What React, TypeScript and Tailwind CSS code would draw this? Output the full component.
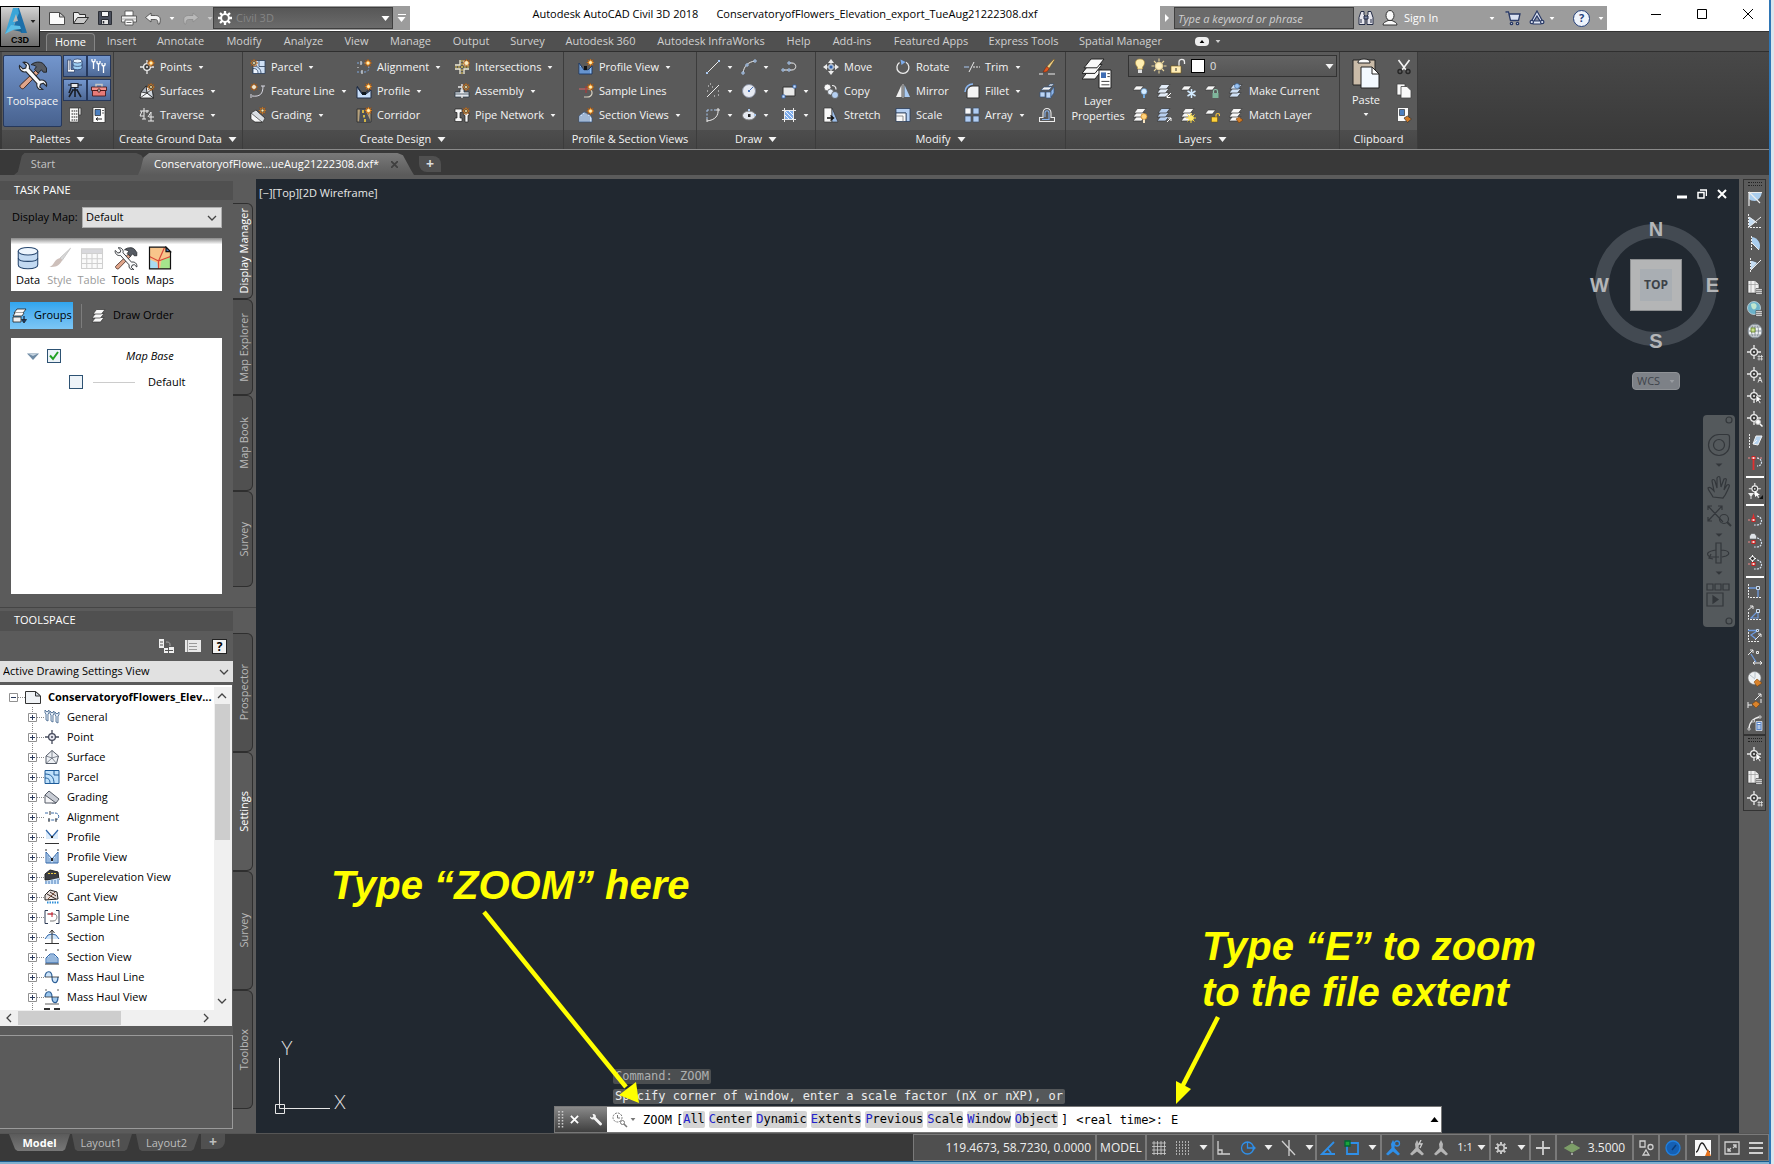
import type { ReactNode } from 'react';

const W = '#ececec';
const B = '#a9c8f0';

// small orange "new" spark used on the create icons
const Spark = ({ x = 12, y = 4 }: { x?: number; y?: number }) => (
  <g transform={`translate(${x} ${y})`}>
    <path
      d="M0-4L1-1.8 3-3 1.8-1 4 0 1.8 1 3 3 1 1.8 0 4-1 1.8-3 3-1.8 1-4 0-1.8-1-3-3-1-1.8Z"
      fill="#f59a2e"
      stroke="#8a4510"
      strokeWidth=".4"
    />
    <circle r="1.5" fill="#fff0b8" />
  </g>
);

const Sheets = ({ c = '#f8f8f8' }: { c?: string }) => (
  <g fill={c} stroke="#333" strokeWidth=".7">
    <path d="M4.5 9.5H13L9.5 14H1z" />
    <path d="M4.5 5.5H13L9.5 10H1z" />
    <path d="M5.5 1.5H14L10.5 6H2z" />
  </g>
);

const Sheet = () => <path d="M4 3h7.5l-3 4H1z" fill="#f8f8f8" stroke="#333" strokeWidth=".6" />;

const Cross = ({ c = W, f = '#3c3c3c' }: { c?: string; f?: string }) => (
  <g stroke={c} strokeWidth="1.3" fill={f}>
    <path d="M8 1v4M8 11v4M1 8h4M11 8h4" />
    <circle cx="8" cy="8" r="3.4" />
    <circle cx="8" cy="8" r="1" fill={c} stroke="none" />
  </g>
);

const RedCurve = () => (
  <g fill="none">
    <path d="M1 9h7" stroke="#f08a8a" strokeDasharray="2 1" />
    <path d="M10 5c6 1 6 9 0 9H7" stroke="#d5e2f0" strokeDasharray="2 1" strokeWidth="1.2" />
    <rect x="5" y="7.5" width="3" height="3" fill="#f7dada" stroke="#c22" />
  </g>
);

const icons: Record<string, ReactNode> = {
  newFile: (
    <g fill="#fbfbfb" stroke="#4a4a4a">
      <path d="M.5 2.5h10l5 4.5v7.5H.5z" />
      <path d="M10.5 2.5V7h5z" fill="#d0d0d0" />
    </g>
  ),
  open: (
    <g fill="#ededed" stroke="#2f2f2f">
      <path d="M.5 13.5v-11h5l1 2h6v3" />
      <path d="M.5 13.5l4-6h11L11 13.500z" fill="#c9c9c9" />
    </g>
  ),
  save: (
    <g stroke="#2c2f36">
      <path d="M1.5 1.5h13v13h-13z" fill="#4a4f5c" />
      <path d="M4.5 1.5h7v5h-7z" fill="#f6f6f6" />
      <path d="M4.5 9.5h7v5h-7z" fill="#e6e6e6" />
      <path d="M6.5 11v2.5" strokeWidth="1.5" />
    </g>
  ),
  print: (
    <g stroke="#4a4a4a" strokeWidth=".8">
      <path d="M4 1h8v5H4z" fill="#fff" />
      <path d="M.5 6h15v6H.5z" fill="#f0f0f0" />
      <path d="M.5 9h15" stroke="#999" />
      <path d="M4 10h8v5H4z" fill="#fff" />
      <path d="M5.5 12.5h5" />
    </g>
  ),
  undo: <path d="M6 3L.5 7.5 6 12V9.5h4.5c1.5 0 2.5 1 2.5 4.5h1.5c2-6 0-8.5-4-8.5H6z" fill="#f5f5f5" stroke="#444" strokeWidth=".8" />,
  redo: <path d="M10 3l5.500 4.500L10 12V9.500H5.500C4 9.500 3 10.500 3 14H1.500c-2-6 0-8.500 4-8.500H10z" fill="#b9b9b9" stroke="#8b8b8b" strokeWidth=".8" />,
  gear: (
    <g stroke="currentColor" fill="none">
      <circle cx="8" cy="8" r="4.4" strokeWidth="2.2" />
      <path d="M8 0v3.5M8 12.5V16M0 8h3.5M12.5 8H16M2.3 2.3l2.4 2.4M11.3 11.3l2.4 2.4M2.3 13.7l2.4-2.4M11.3 4.7l2.4-2.4" strokeWidth="2.6" />
    </g>
  ),
  binoculars: (
    <g fill="#e6e6ee" stroke="#222b45">
      <path d="M3 1.5h3v3l1 2v8H1v-7zM10 1.5h3l2 6v7H9v-8l1-2z" />
      <path d="M6 6h4v3H6z" fill="#7c87a5" />
      <path d="M3 9v4M13 9v4" />
    </g>
  ),
  user: (
    <g fill="#fafafa" stroke="#333">
      <path d="M1 15c0-3 3-3 5-4.5h4c2 1.5 5 1.5 5 4.5z" />
      <ellipse cx="8" cy="5.5" rx="4" ry="5" />
    </g>
  ),
  cart: (
    <g stroke="#2a3a66" strokeWidth="1.3" fill="#d9e1f2">
      <path d="M.5 2h3l2 8.5h8L15 4H4" />
      <circle cx="6.5" cy="13.5" r="1.2" />
      <circle cx="12.5" cy="13.5" r="1.2" />
    </g>
  ),
  share: (
    <g stroke="#2a3a66" strokeWidth="1.2" fill="#dfe6f5">
      <path d="M8 1l6 11-2 2H4l-2-2z" />
      <path d="M8 6l3 5H5z" fill="#8c93a5" />
      <circle cx="2.8" cy="12" r="1.7" />
      <circle cx="13.2" cy="12" r="1.7" />
    </g>
  ),
  tools: (
    <g>
      <path d="M9.5 5.500l1.500 1.500-8 8.200c-.8.7-2.6-1-1.8-1.800z" fill="#e0a58a" stroke="#3d231a" strokeWidth=".5" />
      <path
        d="M7 2.500C9 .8 12 .7 13.500 2l1.700 2.300v2.200h-1.700l-1-1.300-1.700 1.800-2-2 1-1.400C9 2.800 8 2.600 7 2.500z"
        fill="#565b63"
        stroke="#1f2226"
        strokeWidth=".5"
      />
      <path
        d="M.8 3l1.800 1.700 1.500-.4.4-1.500L2.800 1.200C4.800.8 6.600 2.500 6 4.500l5.700 6.300c2-.6 4 1 3.500 3.200l-1.700-1.600-1.500.5-.4 1.500 1.700 1.400c-2 .5-3.700-1.100-3.200-3.200L4.300 6.300C2.300 6.800.4 5 .8 3z"
        fill="#fafbfc"
        stroke="#25282d"
        strokeWidth=".6"
      />
    </g>
  ),
  prospector: (
    <g stroke="#22365e" strokeWidth=".7">
      <path d="M.5 2v12h7v-2.5H4V2z" fill="#fff" />
      <path d="M2.2 2v10" />
      <path d="M6 3v6.5c0 3 9 3 9 0V3z" fill="#9fd0f5" />
      <path d="M6 6.500c0 2.500 9 2.500 9 0" fill="none" />
      <ellipse cx="10.5" cy="3" rx="4.5" ry="2" fill="#e7f4ff" />
    </g>
  ),
  wrenches: (
    <g stroke="#fff" strokeWidth="1.3" fill="none">
      <path d="M1 1v2l1.5 1.5L4 3V1M2.5 4.5V11M6 3v2l1.500 1.500L9 5V3M7.500 6.500V13M11 5v2l1.500 1.500L14 7V5M12.500 8.500V15" />
    </g>
  ),
  survey: (
    <g stroke="#1d2433" fill="#e8e8e8">
      <path d="M4 1.5h7v4H4zM1 3h3M11 3h4" strokeWidth="1.2" />
      <path d="M8 5v3M5 8h6M6 8L2 15M8 8v7M10 8l4 7M4 6l-2 5" fill="none" stroke="#1a1e26" strokeWidth="1.6" />
    </g>
  ),
  toolbox: (
    <g stroke="#3a0e0e" strokeWidth=".8">
      <path d="M5 5V2.5h6V5" fill="none" stroke="#c6c6c6" strokeWidth="1.6" />
      <path d="M.5 5h15v3.5H.5z" fill="#f2918c" />
      <path d="M1.5 8.5h13V14h-13z" fill="#e77b78" />
      <path d="M7 7h2v3H7z" fill="#fff" />
    </g>
  ),
  palA: (
    <g stroke="#333" strokeWidth=".7">
      <path d="M2.5 1h9v14h-9z" fill="#f8f8f8" />
      <path d="M4.5 4h6M4.5 7h6M4.5 10h6M4.5 13h6" stroke="#666" strokeDasharray="1.5 .7" strokeWidth="1.5" />
      <path d="M11.5 1H14v7h-2.5z" fill="#ccc" />
    </g>
  ),
  palB: (
    <g stroke="#222" strokeWidth=".7">
      <path d="M2 .5h12v15H2z" fill="#fdfdfd" />
      <path d="M4 2.5h5.5v6H4z" fill="#4b7fc0" />
      <path d="M11 3.5h2M11 6h2" />
      <path d="M5 12h6M7 10.5L5 12l2 1.5" fill="none" strokeWidth="1" />
    </g>
  ),
  points: (
    <g>
      <Cross />
      <Spark />
    </g>
  ),
  surfaces: (
    <g stroke="#222" strokeWidth=".8">
      <path d="M2 9l5-6 6 3 1.5 9H1z" fill="#f2f4f6" />
      <path d="M7 3l1 7 6.5 5M8 10L1 15" fill="none" />
      <path d="M2 9l5-6 1 7z" fill="#aab1ba" />
      <path d="M8 10l5-4 1.5 9z" fill="#cfd6de" />
      <Spark />
    </g>
  ),
  traverse: (
    <g stroke={W} fill="none">
      <path d="M5 1v11M1 4h9M8 3v3M12 5v9M10 10h5M3 4l-2 5M12 5l-3 5M3 12h4M9 14h6M1 9h4" />
    </g>
  ),
  parcel: (
    <g stroke="#2a3c58" strokeWidth=".8">
      <path d="M3 1.5h12v13H3z" fill="#cfe0f5" />
      <path d="M3 7c5 0 8 3 8 7.5M9 1.5v6M15 7.5H9" fill="none" />
      <path d="M3 9.5c4 0 5 2 5 5H3z" fill="#eef5ff" />
      <Spark x={4} />
    </g>
  ),
  featureLine: (
    <g stroke="#d8d8e2" fill="none">
      <path d="M2 13c8 1 11-2 11-10M11 3h4M1 11v4" />
      <Spark x={4} />
    </g>
  ),
  grading: (
    <g stroke="#333" strokeWidth=".7">
      <path d="M1 6l5-3 9 8-2 4H5l-4-3z" fill="#d9dde2" />
      <path d="M1 6v6l4 3h7z" fill="#f8f8f8" />
      <path d="M6 3l9 8" fill="none" />
      <Spark x={12.5} y={3.5} />
    </g>
  ),
  alignment: (
    <g fill="none">
      <path d="M1 4h9M1 13h8c5 0 5-7 1-9" stroke="#7fa8de" strokeDasharray="2 1.5" />
      <path d="M5 2v4M6 11v4M2 8v1" stroke={W} />
      <Spark />
    </g>
  ),
  profile: (
    <g>
      <path d="M1 4v11h14V7l-5 4H6z" fill="#c7defa" stroke="#1e2c46" />
      <path d="M1 3l5 7h3l5-4" fill="none" stroke="#1e2c46" />
      <path d="M6 9h4v3H6z" fill="#101820" />
      <Spark x={12.5} y={3.5} />
    </g>
  ),
  corridor: (
    <g>
      <path d="M1 2h14v13H1z" fill="#b7a27c" stroke="#333" />
      <path d="M4 2h5l6 13H3z" fill="#4b5058" />
      <path d="M7 3v3M8 8v2.5M9 12v3" stroke="#ffd640" strokeWidth="1.5" />
      <Spark x={12.5} y={3.5} />
    </g>
  ),
  intersections: (
    <g stroke="#f0ecd8">
      <path d="M6 1v5H1M10 1v5h5M6 15v-5H1M10 15v-5h5" fill="none" strokeWidth="1.3" />
      <path d="M8 1v14M1 8h14" stroke="#e2c24a" strokeDasharray="2 1" />
      <Spark x={12.5} />
    </g>
  ),
  assembly: (
    <g stroke="#24303f" strokeWidth=".7">
      <path d="M1 9h5V6h4v3h5v5H1z" fill="#dfe5ec" />
      <path d="M8 1v14M4 4h4" stroke="#e9e9e9" strokeWidth="1.4" />
      <path d="M1 11h14" />
      <Spark x={12} />
    </g>
  ),
  pipe: (
    <g fill="#f8f8f8" stroke="#222" strokeWidth=".7">
      <path d="M1 2h7v3.5H6V11h2v3.5H1V11h2V5.5H1z" />
      <path d="M10 6h5v2.5h-1V15h-3V8.5h-1z" />
      <Spark />
    </g>
  ),
  profileView: (
    <g>
      <path d="M1 4v11h13V7l-4 4H6z" fill="#8fbcf2" stroke="#1e3a66" />
      <path d="M3 8v7M5 10v5M7 12v3M9 12v3M11 10v5" stroke="#1c4b91" strokeWidth=".7" />
      <path d="M6 7h3v4H6z" fill="#111" />
      <Spark x={12.5} y={3.5} />
    </g>
  ),
  sampleLines: (
    <g fill="none">
      <path d="M1 6h9" stroke="#d66" />
      <path d="M10 6c6 1 5 8-1 8H6" stroke="#d8d2c2" strokeWidth="1.2" />
      <path d="M8 3v7" stroke="#b33" />
      <Spark x={12.5} />
    </g>
  ),
  sectionViews: (
    <g>
      <path d="M1 15V9l5-4 6 3 2 3v4z" fill="#cfe1f7" stroke="#35557f" strokeWidth=".7" />
      <path d="M3 9v6M5 7v8M7 6v9M9 7v8M11 9v6" stroke="#35557f" strokeWidth=".6" />
      <Spark x={12.5} />
    </g>
  ),
  line: (
    <g>
      <path d="M2 14L14 2" stroke={W} />
      <path d="M1 13h2v2H1zM13 1h2v2h-2z" fill={B} />
    </g>
  ),
  arc: (
    <g fill="none">
      <path d="M2 14C3 7 7 3 14 2" stroke={W} />
      <path d="M1 13h2v2H1zM5 5h2v2H5zM13 1h2v2h-2z" fill="#5a5a5a" stroke={B} />
    </g>
  ),
  pline: (
    <g fill="none">
      <path d="M8 4h3c5 0 5 7 0 7H2" stroke={W} />
      <path d="M7 3h2v2H7zM1 10h2v2H1zM7 10h2v2H7z" fill="#5a5a5a" stroke={B} />
    </g>
  ),
  construct: (
    <g>
      <path d="M2 14L14 2" stroke={W} />
      <path d="M3 3h1M7 4h1M2 8h1M13 8h1M9 13h1M13 12h1M5 1h1" stroke={W} />
    </g>
  ),
  circle: (
    <g>
      <circle cx="8" cy="8" r="6.5" fill="#e6eaf2" stroke="#888fa0" />
      <path d="M8 8l4-4" stroke="#4a74b8" />
      <path d="M7 7h2v2H7z" fill="#4a74b8" />
    </g>
  ),
  rect: (
    <g>
      <path d="M2 4h12v9H2z" fill="#e9e9e9" stroke="#333" />
      <path d="M1 12h3v3H1zM12 2h3v3h-3z" fill="#cfe0f8" stroke="#3465ad" strokeWidth=".8" />
    </g>
  ),
  arc3: (
    <g fill="none">
      <path d="M2 3v9M2 3h9" stroke={B} strokeDasharray="2 1.5" />
      <path d="M13 1c1 8-3 12-11 13M11 3h4M2 12v3" stroke={W} />
    </g>
  ),
  ellipse: (
    <g>
      <ellipse cx="8" cy="8.5" rx="6.5" ry="4.5" fill="#e4e8f0" stroke="#777" />
      <path d="M7 7h2.5v3H7z" fill="#222" />
      <path d="M7 2h2v2H7zM13 7h2v2h-2z" fill={B} />
    </g>
  ),
  hatch: (
    <g>
      <path d="M4 4h8v8H4z" fill="#7fadea" />
      <path d="M4 8l4 4M4 4l8 8M8 4l4 4" stroke="#eef4ff" />
      <path d="M3.5 1v14M12.5 1v14M1 3.5h14M1 12.5h14" stroke={W} />
    </g>
  ),
  move: (
    <g fill={W}>
      <path d="M8 0l3 4H5zM8 16l3-4H5zM0 8l4-3v6zM16 8l-4-3v6z" />
      <path d="M7.5 4h1v8h-1zM4 7.5h8v1H4z" />
      <path d="M6 6h4v4H6z" fill="#2f5fa8" stroke="#c9d9ef" />
    </g>
  ),
  copy: (
    <g stroke="#555" strokeWidth=".8">
      <circle cx="4.5" cy="4.5" r="3.5" fill="#f8f8f8" />
      <circle cx="7.5" cy="9" r="3" fill="#e4ecf7" />
      <circle cx="12" cy="12" r="3.5" fill="#b5d0f2" />
      <path d="M9 2.5c3 0 4 1 4 4" fill="none" stroke={W} strokeWidth="1.2" />
    </g>
  ),
  stretch: (
    <g stroke="#333" strokeWidth=".7">
      <path d="M1 1h8v14H1z" fill="#f8f8f8" />
      <path d="M9 1l6 14H9z" fill="#9ec0ec" />
      <path d="M4 11h6M7.5 8.5l3 2.5-3 2.5" fill="none" stroke="#111" strokeWidth="1.4" />
    </g>
  ),
  rotate: (
    <g fill="none" stroke={W} strokeWidth="1.3">
      <path d="M4.5 3.5A6 6 0 1 0 11 3.3" />
      <path d="M5.5.5l5 2.5-4 3z" fill="#7eaceb" stroke="none" />
    </g>
  ),
  mirror: (
    <g>
      <path d="M6.5 2v12H1z" fill="#f0f0f0" />
      <path d="M9.5 2v12H15z" fill="#aacbf2" />
      <path d="M8 1v14" stroke="#ddd" strokeWidth=".8" />
    </g>
  ),
  scale: (
    <g stroke="#2b3c58" strokeWidth=".8">
      <path d="M1 1.5h14v13h-4V6H1z" fill="#b4cff2" />
      <path d="M1 6h10v8.5H1z" fill="#f8f8f8" />
      <path d="M1 9h7v5.5" fill="none" stroke="#777" />
    </g>
  ),
  trim: (
    <g fill="none">
      <path d="M0 8h5" stroke={B} />
      <path d="M9 8h7" stroke={W} strokeDasharray="2 1" />
      <path d="M5 13L10 3" stroke={W} />
    </g>
  ),
  fillet: (
    <g>
      <path d="M3 15V9c0-4 3-6 6-6h6v12z" fill="#f4f4f4" stroke="#333" />
      <path d="M1 9c0-5 4-8 8-8" stroke="#8ab6f0" strokeWidth="1.5" fill="none" />
    </g>
  ),
  array: (
    <g fill="#b0cdf3" stroke="#3d4d66" strokeWidth=".7">
      <path d="M1 1h6v6H1z" fill="#f8f8f8" />
      <path d="M9 1h6v6H9zM1 9h6v6H1zM9 9h6v6H9z" />
    </g>
  ),
  erase: (
    <g>
      <path d="M15 0L8 7.5l2 2L15.5 1z" fill="#f3d58a" stroke="#6c4a10" strokeWidth=".5" />
      <path d="M8 7.5l2 2c-1 3-3 4-6 3.5 1-1 2-4 4-5.5z" fill="#e0551e" stroke="#6b2208" strokeWidth=".5" />
      <path d="M0 15h4M9 15h7" stroke={W} />
    </g>
  ),
  explode: (
    <g stroke="#35557f" strokeWidth=".7">
      <path d="M1 9h5v5H1zM7 9h5v6H7z" fill="#bcd5f4" />
      <path d="M2 7l3-3h8l-3 3z" fill="#f5f5f5" />
      <path d="M12 8l3-4v6l-3 4z" fill="#8fb6e8" />
      <path d="M9 3l2-2h4l-2 2z" fill="#f5f5f5" />
    </g>
  ),
  offset: (
    <g fill="none" strokeWidth="1.1">
      <path d="M.5 14.5h15v-4H12V6c0-6-8-6-8 0v4.5H.5z" stroke={W} />
      <path d="M3 12.5h7V6c0-3-4-3-4 0v4" stroke="#86b0ea" />
    </g>
  ),
  layerProps: (
    <g>
      <g fill="#f8f8f8" stroke="#222" strokeWidth=".5">
        <path d="M3.5 6.5H10L6.5 11H0z" />
        <path d="M3.5 3.7H10L6.5 8.2H0z" />
        <path d="M4.5 1H11L7.5 5.4H1z" />
      </g>
      <path d="M8.5 6.5h6v9h-6z" fill="#fff" stroke="#222" strokeWidth=".5" />
      <path d="M9.5 7.7H12v2.8H9.5z" fill="#3f6db3" />
      <path d="M12.7 8.3h1.2M12.7 9.8h1.2M9.7 12.2h4M9.7 13.9h4" stroke="#444" strokeWidth=".5" />
    </g>
  ),
  bulb: (
    <g>
      <path d="M8 1c6 0 5 6 2.5 8v2h-5V9C3 7 2 1 8 1z" fill="#ffeeb0" stroke="#b8933a" strokeWidth=".6" />
      <path d="M6 11.5h4V15H6z" fill="#e0e0e0" />
    </g>
  ),
  sun: (
    <g stroke="#e8d49a" strokeWidth="1.1">
      <path d="M8 .5v3M8 12.5v3M.5 8h3M12.5 8h3M3 3l2 2M11 11l2 2M3 13l2-2M11 5l2-2" />
      <circle cx="8" cy="8" r="3.5" fill="#fff2c4" />
    </g>
  ),
  unlock: (
    <g>
      <path d="M9 8V4c0-3.5 5.500-3.500 5.500 0v2" fill="none" stroke="#eee" strokeWidth="1.3" />
      <path d="M1 8h10v7H1z" fill="#ffedb5" stroke="#7a5b12" strokeWidth=".6" />
      <path d="M6 10v3" stroke="#333" />
    </g>
  ),
  ly1: (
    <g>
      <Sheet />
      <circle cx="12" cy="8.5" r="3" fill="#d6ecff" stroke="#4d8ac4" strokeWidth=".6" />
      <path d="M11 11.5h2V15h-2z" fill="#6fa8dd" />
    </g>
  ),
  ly2: (
    <g>
      <Sheets c="#e3edf9" />
      <path d="M15 10l-4 4M11 11v3.5h3.5" stroke="#fff" fill="none" />
    </g>
  ),
  ly3: (
    <g>
      <Sheet />
      <path d="M11.5 6v9M7.5 8l8 5M7.5 13l8-5" stroke="#d3ebff" strokeWidth="1.5" />
    </g>
  ),
  ly4: (
    <g>
      <Sheet />
      <path d="M9.5 10V8c0-2 4-2 4 0v2" fill="none" stroke="#8fc7ad" strokeWidth="1.2" />
      <path d="M8.5 10h6v5h-6z" fill="#7fb59b" />
    </g>
  ),
  ly5: (
    <g>
      <Sheets />
      <circle cx="12" cy="9.5" r="3" fill="#ffd27a" stroke="#c77a14" strokeWidth=".7" />
      <path d="M11 12.5h2V16h-2z" fill="#f7e4c0" />
    </g>
  ),
  ly6: (
    <g>
      <Sheets c="#b8d0f0" />
      <path d="M11 15l4-4M12 11h3v3" stroke="#fff" fill="none" />
    </g>
  ),
  ly7: (
    <g>
      <Sheets />
      <path d="M11 6v10M6 11h10M7.5 7.5l7 7M7.5 14.5l7-7" stroke="#ffd83a" />
      <circle cx="11" cy="11" r="2.8" fill="#ffe96b" />
    </g>
  ),
  ly8: (
    <g>
      <Sheet />
      <path d="M12 10V8c0-2 3.5-2 3.5 0v1" fill="none" stroke="#f2c03a" strokeWidth="1.2" />
      <path d="M7.5 10h6v5h-6z" fill="#ffd23d" stroke="#6b4d00" strokeWidth=".5" />
    </g>
  ),
  makeCurrent: (
    <g>
      <Sheets c="#cfe0f5" />
      <circle cx="9" cy="3" r="2.5" fill="#9cc4f2" stroke="#345f96" strokeWidth=".6" />
    </g>
  ),
  matchLayer: (
    <g>
      <Sheets />
      <path d="M8 12l3-2 4 3-4 3z" fill="#d07a25" stroke="#5c3108" strokeWidth=".5" />
    </g>
  ),
  paste: (
    <g stroke="#222" strokeWidth=".5">
      <path d="M1.5 1.5h11V14h-11z" fill="#cabba8" />
      <path d="M4 2.5c0-2 6-2 6 0V3H4z" fill="#fafafa" />
      <path d="M5.5 5H11l3.5 3.5v7h-9z" fill="#f3f9ff" />
      <path d="M11 5v3.5h3.5z" fill="#fff" />
    </g>
  ),
  cut: (
    <g fill="none">
      <path d="M2.5 1L10 11M13.5 1L6 11" stroke="#f4f4f4" strokeWidth="1.6" />
      <circle cx="4" cy="12.5" r="2" stroke="#262626" strokeWidth="1.4" />
      <circle cx="12" cy="12.5" r="2" stroke="#262626" strokeWidth="1.4" />
    </g>
  ),
  copyClip: (
    <g fill="#fafafa" stroke="#444" strokeWidth=".8">
      <path d="M1 1h8v11H1z" />
      <path d="M5 3.5h6l4 4V15H5z" />
    </g>
  ),
  pasteSpec: (
    <g stroke="#333" strokeWidth=".7">
      <path d="M1.5.5h11v14h-11z" fill="#fafafa" />
      <path d="M3.5 2.5h5v6h-5z" fill="#4b7fc0" />
      <path d="M8 11l3.5-2 4 3-4 3.5z" fill="#d07a25" />
    </g>
  ),
  db: (
    <g stroke="#27476f" strokeWidth=".7">
      <path d="M1.5 3.5v9c0 3.5 13 3.5 13 0v-9z" fill="#c3daf2" />
      <path d="M1.5 8c0 3 13 3 13 0" fill="none" />
      <ellipse cx="8" cy="3.5" rx="6.5" ry="2.5" fill="#edf5fd" />
    </g>
  ),
  brush: (
    <g>
      <path d="M15 1.5L8 8l1.5 1.5z" fill="#d8d8d8" stroke="#c4c4c4" strokeWidth=".6" />
      <path d="M8 8l1.5 1.5C7.5 13.5 5 14 1 14c3-1 3-5 7-6z" fill="#cdbfba" />
    </g>
  ),
  table: (
    <g stroke="#d0d0d0" fill="#fafafa" strokeWidth=".7">
      <path d="M1 2h14v13H1z" />
      <path d="M1 2h14v3H1z" fill="#d8d8dc" />
      <path d="M1 8.5h14M1 11.7h14M4.5 5v10M8 5v10M11.5 5v10" />
    </g>
  ),
  map: (
    <g strokeWidth=".8">
      <path d="M1 .8h11l3 3v11.400H1z" fill="#f8c58b" />
      <path d="M1 9l5 2 1 4.200H1z" fill="#a9dcf2" />
      <path d="M9 9.5l6-2v7.7H8z" fill="#a5e58c" />
      <path d="M1 7l6 3 4-9M7 10l8-3M7 10v5" stroke="#d9483a" fill="none" />
      <path d="M1 .8h11l3 3v11.400H1z" fill="none" stroke="#111" />
      <path d="M12 .8v3h3z" fill="#4a7bc0" stroke="#111" />
    </g>
  ),
  groups: (
    <g stroke="#222" strokeWidth=".8">
      <path d="M5 1h9l-3 4H2z" fill="#fafafa" />
      <path d="M3 5L1 8h9l2-3" fill="#fafafa" />
      <path d="M1 9h8v5H1z" fill="#f0f0f0" />
      <path d="M12 8v6" strokeWidth="1.5" stroke="#1b3c66" />
      <path d="M9.5 11.5L12 15l2.5-3.5z" fill="#1b3c66" />
    </g>
  ),
  sheets: <Sheets />,
  treeGeneral: (
    <g stroke="#4f6f94" fill="#e4edf7" strokeWidth=".9">
      <path d="M1 1v3l1 1v6l2 1V5l1-1V1L3 3zM6 2v3l1 1v6l2 1V6l1-1V2L8 4zM11 3v3l1 1v6l2 1V7l1-1V3l-2 2z" />
    </g>
  ),
  treePoint: <Cross c="#44495a" f="#e6e6ee" />,
  treeSurface: (
    <g stroke="#555c68" fill="#edf0f4">
      <path d="M8 1.5L14.5 7l-2 7.5H2V7z" />
      <path d="M8 1.5V9M2 7l6 2 6.5-2M8 9l-6 5.5M8 9l4.5 5.5" fill="none" strokeWidth=".7" />
    </g>
  ),
  treeParcel: (
    <g stroke="#1e5c9a">
      <path d="M1 1.5h14v13H1z" fill="#bfe1fb" />
      <path d="M1 5c6 0 9 3 9 9.5M1 9c4 0 5 2 5 5.5M10 1.5V6h5" fill="none" />
    </g>
  ),
  treeGrading: (
    <g stroke="#555b66">
      <path d="M1 6l4-4 10 8-3 4H8z" fill="#c8ccd4" />
      <path d="M1 6v8h11z" fill="#f4f4f6" />
    </g>
  ),
  treeAlign: (
    <g fill="none" stroke="#3a6aa5">
      <path d="M1 4h4M7 4h4c5 0 5 7 0 7H4" strokeDasharray="3 1" />
      <path d="M6 2v4M5 9v4M12 9v4" stroke="#333" />
    </g>
  ),
  treeProfile: (
    <g fill="none">
      <path d="M2 2v8h12V2L8 8z" fill="#dcecfb" />
      <path d="M2 1l6 7 6-7" stroke="#2f65a8" strokeWidth="1.2" />
      <path d="M1 14.5h14" stroke="#333" />
      <path d="M7 7h2v2H7z" fill="#222" />
    </g>
  ),
  treePV: (
    <g fill="none">
      <path d="M2 3l6 7 6-7v11H2z" fill="#cfe5fa" stroke="#2f65a8" />
      <path d="M4 6v8M6 9v5M10 9v5M12 6v8" stroke="#2f65a8" strokeWidth=".7" />
      <path d="M1 1h2M13 1h2" stroke="#333" />
      <path d="M7 9h2v3H7z" fill="#222" />
    </g>
  ),
  treeSuper: (
    <g>
      <path d="M1 5l5-4 8 2 1 8H1z" fill="#3b3d42" stroke="#222" />
      <path d="M4 4.5h8" stroke="#f1cf45" strokeDasharray="2 1" strokeWidth="1.2" />
      <path d="M1 12l14-3v6H1z" fill="#cfe5fa" />
      <path d="M2 12v3M5 12v3M8 11v4M11 11v4M14 10v5" stroke="#2f65a8" strokeWidth=".8" />
    </g>
  ),
  treeCant: (
    <g>
      <path d="M1 6l5-5 7 2 1 7-13 1z" fill="#e8e0dc" stroke="#222" />
      <path d="M3 5l9 5M6 3l6 4" stroke="#3b2b28" />
      <path d="M4 10l7-7" stroke="#8a5a40" />
      <path d="M3 13.5h12" stroke="#2f8fd8" strokeWidth="2" strokeDasharray="1.5 1" />
    </g>
  ),
  treeSample: (
    <g fill="none" stroke="#2d3b55">
      <path d="M4 1.5H1v13h3M12 1.5h3v13h-3" />
      <path d="M3 5h7c4 0 4 7-1 7H6" stroke="#777" />
      <path d="M8 3v5M4 5h5" stroke="#c23" />
    </g>
  ),
  treeSection: (
    <g fill="none">
      <path d="M1 10l3-4 4-1 4 1 3 4z" fill="#cfe5fa" />
      <path d="M1 10l3-4 4-1 4 1 3 4" stroke="#2f65a8" />
      <path d="M8 1v13M5.5 4L8 1l2.5 3M1 14.5h14" stroke="#333" />
    </g>
  ),
  treeSV: (
    <g>
      <path d="M2 14V9l4-4h4l4 4v5z" fill="#cfe5fa" stroke="#2f65a8" />
      <path d="M4 8v6M6 6v8M8 6v8M10 6v8M12 8v6" stroke="#2f65a8" strokeWidth=".7" />
      <path d="M1 1h2M13 1h2M1 15h14" stroke="#333" />
    </g>
  ),
  treeMass: (
    <g fill="none" stroke="#2d5f96" strokeWidth="1.2">
      <path d="M1 8c0-7 7-7 7 0s6 8 6 0" fill="#cfe5fa" />
      <path d="M1 8h14" stroke="#333" strokeWidth=".8" />
    </g>
  ),
  treeMassView: (
    <g fill="none" stroke="#2d5f96" strokeWidth="1.2">
      <path d="M1 8c0-7 7-7 7 0s6 8 6 0" fill="#9cc7ee" />
      <path d="M1 8h14M1 1h2M13 1h2M1 15h14" stroke="#333" strokeWidth=".8" />
    </g>
  ),
  drawing: (
    <g fill="#f0f3f6" stroke="#333">
      <path d="M.5 2.5h10l5 4.5v7.5H.5z" />
      <path d="M10.5 2.5V7h5z" fill="#cfd8e2" />
    </g>
  ),
  panorama: (
    <g fill="#f0f0f0">
      <path d="M1 1h5v9H1zM6 10h4v5H6zM11 9h5v6h-5z" />
      <path d="M2 4h3M2 7h3M7 12.5h8" stroke="#555" />
      <path d="M8 4c4 0 4 1 4 4" fill="none" stroke="#aaa" />
    </g>
  ),
  listPanel: (
    <g fill="#e8e8e8">
      <path d="M0 2h16v12H0z" />
      <path d="M4 5.5h8M4 8.5h8M4 11.5h8M2.5 2v12" stroke="#9a9a9a" />
    </g>
  ),
  t1: (
    <g>
      <path d="M2 1h13c-1 5-3 8-7 9-3 0-5-1-6-2z" fill="#a9cdee" />
      <path d="M1 1.5h14M2 1v14M2 1l11 11" stroke={W} strokeWidth="1.2" />
    </g>
  ),
  t2: (
    <g>
      <path d="M2 4c5 2 7 5 7 5l-7 5z" fill="#c5ddf3" />
      <path d="M1.5 1v13.5H15" stroke={W} fill="none" strokeDasharray="2 1" />
      <path d="M2 14L14 4M2 4l8 6" stroke={W} />
    </g>
  ),
  t3: (
    <g>
      <path d="M5 2c6 1 10 7 7 13L5 8z" fill="#a9cdee" />
      <path d="M4.5 1v14" stroke={W} strokeDasharray="2 1" />
      <path d="M5 8l7 7" stroke={W} />
    </g>
  ),
  t4: (
    <g>
      <path d="M4 4c3 0 6 2 6 2l-6 7z" fill="#c5ddf3" />
      <path d="M3.5 1v14" stroke={W} strokeDasharray="2 1" />
      <path d="M4 13L14 3" stroke={W} />
    </g>
  ),
  t5: (
    <g>
      <path d="M1 1.5h7L12 5v9H1z" fill="#f0f0f0" stroke="#333" strokeWidth=".6" />
      <path d="M4 2v12M8 2v12M1 5.5h11" stroke="#999" strokeWidth=".7" />
      <path d="M9 9.5h6v6H9z" fill="#fff" stroke="#333" strokeWidth=".6" />
      <path d="M11 9.5v6M13 9.5v6M9 11.5h6M9 13.5h6" stroke="#555" strokeWidth=".6" />
    </g>
  ),
  t6: (
    <g>
      <circle cx="7" cy="7" r="6.5" fill="#6cb2c9" stroke="#d5e4ea" strokeWidth=".7" />
      <path d="M4 3c4-2 7 1 5 4s-5 1-5-4z" fill="#c0e6d0" />
      <path d="M9 9.5h6v6H9z" fill="#fff" stroke="#333" strokeWidth=".6" />
      <path d="M11 9.5v6M13 9.5v6M9 11.5h6M9 13.5h6" stroke="#555" strokeWidth=".6" />
    </g>
  ),
  t7: (
    <g fill="none" stroke="#7a848e" strokeWidth=".8">
      <circle cx="8" cy="8" r="7" fill="#eef2f4" />
      <path d="M1 8h14M8 1v14M3 4h10M3 12h10" />
      <ellipse cx="8" cy="8" rx="3.5" ry="7" />
      <path d="M4 5h4v4H4z" fill="#c8e08a" stroke="#5f7d22" />
    </g>
  ),
  t8: (
    <g>
      <g transform="translate(-1 -1)"><Cross /></g>
      <path d="M10.5 11.5H16M10.5 14H16M12 10v5.5M14.5 10v5.5" stroke="#ddd" strokeWidth=".8" />
    </g>
  ),
  t9: (
    <g>
      <g transform="translate(-1 -1)"><Cross /></g>
      <path d="M11 15.5l2-5.5 2 5.5M11.7 13.5h2.6" stroke="#ddd" fill="none" />
    </g>
  ),
  t10: (
    <g>
      <g transform="translate(-1 -1)"><Cross /></g>
      <path d="M9 6v8l2-2 2 3 1-1-2-3h3z" fill="#fff" stroke="#333" strokeWidth=".5" />
    </g>
  ),
  t11: (
    <g>
      <g transform="translate(-1 -1)"><Cross /></g>
      <circle cx="11" cy="11" r="2.5" fill="#fff" stroke="#bbb" />
      <path d="M13 13l2.5 2.5" stroke="#fff" strokeWidth="1.5" />
    </g>
  ),
  t12: (
    <g>
      <path d="M2.5 1v14" stroke={W} strokeDasharray="2 1" />
      <path d="M6 11l3-8h6l-4 9z" fill="#b5d2ee" stroke="#f2f2f2" />
      <path d="M6 11l4-4" stroke="#f2f2f2" />
    </g>
  ),
  t13: (
    <g fill="none">
      <path d="M1 3h14" stroke="#f08a8a" strokeDasharray="2 1" />
      <path d="M10 3c6 1 6 8 0 8" stroke="#d5e2f0" strokeDasharray="2 1" strokeWidth="1.2" />
      <path d="M6.5 3v12" stroke="#e03030" strokeWidth="1.8" />
      <path d="M5 1.5h3v3H5z" fill="#f7dada" stroke="#c22" />
    </g>
  ),
  t14: (
    <g>
      <g transform="translate(1 -1) scale(.85)"><Cross /></g>
      <path d="M1 10h6l-3 4zM3.5 12h1v4h-1z" fill={W} />
      <path d="M8 8v6l2-1.5 1 2.5 1-.5-1-2.500h2z" fill="#fff" />
      <path d="M16 12v4h-4z" fill="#111" />
    </g>
  ),
  t15: (
    <g>
      <RedCurve />
      <path d="M6.5 2L8 7.5H5z" fill="#e03030" />
    </g>
  ),
  t16: (
    <g>
      <RedCurve />
      <path d="M2.5 6V3l2-2.5h3l2 2.5v3z" fill="#dfe3e8" stroke="#555" strokeWidth=".6" />
    </g>
  ),
  t17: (
    <g>
      <RedCurve />
      <path d="M5.5 0v7M2 3.5h7" stroke="#fff" />
      <circle cx="5.5" cy="3.5" r="2" fill="#333" stroke="#fff" />
    </g>
  ),
  t18: (
    <g fill="none">
      <path d="M1.5 1v13.5H15" stroke={W} strokeDasharray="2 1" />
      <path d="M2 5h9v9" stroke="#6e9ade" strokeWidth="1.3" />
      <path d="M9.5 3.5h3v3h-3z" fill="#555" stroke="#cde" />
    </g>
  ),
  t19: (
    <g fill="none">
      <path d="M1.5 7v7.5H15" stroke={W} strokeDasharray="2 1" />
      <path d="M1 5l5-4M3 1h3v3" stroke={W} />
      <path d="M4 13l7-7v7z" stroke="#6e9ade" strokeWidth="1.2" />
      <path d="M9.5 4.5h3v3h-3z" fill="#555" stroke="#cde" />
    </g>
  ),
  t20: (
    <g fill="none">
      <path d="M1.5 2v12.5H12" stroke={W} strokeDasharray="2 1" />
      <path d="M1 3.5h10L4 8l5 4" stroke="#6e9ade" strokeWidth="1.3" />
      <path d="M9.5 2.5h2v2h-2z" fill="#555" stroke="#cde" />
      <path d="M8 13l6-6M11 7h3v3" stroke={W} />
    </g>
  ),
  t21: (
    <g fill="none">
      <path d="M1 6l5-5M3 1h3v3M9.5 2.5h2v2h-2zM6 14h9M8 12l-2 2 2 1.5M13 12l2 2-2 1.5" stroke={W} />
      <path d="M4 5l5 8" stroke="#6e9ade" strokeWidth="1.2" />
    </g>
  ),
  t22: (
    <g>
      <circle cx="7.5" cy="7" r="6.5" fill="#eef1f3" stroke="#777" strokeWidth=".6" />
      <path d="M3 4l5 4M8 1v6" stroke="#b9c4cc" />
      <path d="M7 11l3-3 5 4-5 3.5z" fill="#d9822b" stroke="#6b3a08" strokeWidth=".5" />
    </g>
  ),
  t23: (
    <g>
      <path d="M1 9v6M1 12h4M8 7l6-6M11 1h3v3M14 6v4" stroke={W} fill="none" />
      <path d="M5 11l4-3 4 3-4 4z" fill="#d9822b" stroke="#6b3a08" strokeWidth=".5" />
    </g>
  ),
  t24: (
    <g>
      <path d="M2 14C2 8 6 3 13 2" fill="none" stroke={W} strokeWidth="1.3" />
      <path d="M1 13h2v2H1zM5 5h2.5v2H5zM12 1h2v2h-2z" fill="#555" stroke={W} strokeWidth=".7" />
      <path d="M9 6.5h6v9H9z" fill="#5b86c9" stroke="#eee" strokeWidth=".7" />
      <path d="M10.5 8.5h3M10.5 11h3M10.5 13h3" stroke="#fff" />
    </g>
  ),
};

function Icon({ name, size = 'size-4' }: { name: string; size?: string }) {
  return (
    <svg viewBox="0 0 16 16" className={`${size} shrink-0`} aria-hidden="true">
      {icons[name]}
    </svg>
  );
}

function Caret({ big = false, className = '' }: { big?: boolean; className?: string }) {
  return (
    <svg viewBox="0 0 8 5" className={`${big ? 'w-[9px] h-[5px]' : 'w-[6px] h-[3px]'} shrink-0 ${className}`} aria-hidden="true">
      <path d="M0 0h8L4 5z" fill="currentColor" />
    </svg>
  );
}

function Cmd({ icon, label, caret }: { icon: string; label: string; caret?: boolean }) {
  return (
    <button className="flex h-6 items-center whitespace-nowrap text-left">
      <Icon name={icon} />
      <span className="ml-[5px]">{label}</span>
      {caret && <Caret className="ml-[6px]" />}
    </button>
  );
}

function IconCmd({ icon, caret }: { icon: string; caret?: boolean }) {
  return (
    <button aria-label={icon} className="flex h-6 items-center gap-[6px]">
      <Icon name={icon} />
      {caret && <Caret />}
    </button>
  );
}

function Panel({ title, caret, className, children }: { title: string; caret?: boolean; className: string; children: ReactNode }) {
  return (
    <section className={`flex shrink-0 flex-col border-r border-[#3c3c3c] bg-[#5a5a5a] ${className}`}>
      <div className="flex-1 pt-[3px]">{children}</div>
      <button className="flex h-[19px] items-center justify-center gap-[6px] bg-linear-to-b from-[#4d4d4d] to-[#454545] whitespace-nowrap">
        {title}
        {caret && <Caret big />}
      </button>
    </section>
  );
}

const ribbonTabs = [
  ['Insert', 'w-[49px]'],
  ['Annotate', 'w-[69px]'],
  ['Modify', 'w-[58px]'],
  ['Analyze', 'w-[61px]'],
  ['View', 'w-[45px]'],
  ['Manage', 'w-[63px]'],
  ['Output', 'w-[58px]'],
  ['Survey', 'w-[55px]'],
  ['Autodesk 360', 'w-[91px]'],
  ['Autodesk InfraWorks', 'w-[130px]'],
  ['Help', 'w-[45px]'],
  ['Add-ins', 'w-[62px]'],
  ['Featured Apps', 'w-[96px]'],
  ['Express Tools', 'w-[89px]'],
  ['Spatial Manager', 'w-[105px]'],
];

function TitleBar() {
  return (
    <div className="relative flex h-[31px] items-start bg-white">
      <button
        aria-label="Application menu"
        className="absolute top-[6px] left-0 z-10 flex h-[41px] w-10 flex-col items-center border border-black bg-linear-to-b from-[#d2d2d2] to-[#6d6d6d]"
      >
        <span className="flex w-full items-center pl-[3px]">
          <svg viewBox="0 0 24 28" className="h-7 w-6" aria-hidden="true">
            <path d="M9 1h6l8 25h-6l-2-6-5-1 2-6z" fill="#1d6fa9" />
            <path d="M9 1h5l1 5-6 14-2 1-6 6z" fill="#3aa5d8" />
            <path d="M1 27l6-9 9 1 1 3-8 1z" fill="#5cc0e8" />
            <path d="M12 7l2 7-5 1z" fill="#b9b9b9" />
            <path d="M9 23l8-1 1 3z" fill="#17618f" />
          </svg>
          <Caret className="ml-[2px] text-[#222]" />
        </span>
        <span className="font-['Liberation_Sans'] text-[9px] leading-[10px] font-bold text-black">C3D</span>
      </button>
      <div className="mt-[6px] ml-10 flex h-6 w-[370px] items-center bg-[#9c9c9c] pl-[9px] text-white">
        <button aria-label="New"><Icon name="newFile" /></button>
        <button aria-label="Open" className="ml-2"><Icon name="open" /></button>
        <button aria-label="Save" className="ml-2"><Icon name="save" /></button>
        <button aria-label="Print" className="ml-2"><Icon name="print" /></button>
        <button aria-label="Undo" className="ml-2 flex items-center gap-2"><Icon name="undo" /><Caret /></button>
        <button aria-label="Redo" className="ml-2 flex items-center gap-2"><Icon name="redo" /><Caret className="text-[#ccc]" /></button>
        <div className="ml-auto flex h-[22px] w-[180px] items-center border border-[#3f3f3f] bg-linear-to-b from-[#575757] to-[#6b6b6b] pr-[2px] pl-1">
          <Icon name="gear" size="size-[14px]" />
          <select aria-label="Workspace" className="ml-1 flex-1 appearance-none text-[#858585] outline-none">
            <option>Civil 3D</option>
          </select>
          <Caret big />
        </div>
        <button aria-label="Customize" className="flex h-full w-[17px] flex-col items-center justify-center gap-[2px]">
          <span className="h-px w-2 bg-white" />
          <Caret big />
        </button>
      </div>
      <h1 className="flex h-7 flex-1 items-center justify-center gap-[18px] whitespace-nowrap text-black">
        <span>Autodesk AutoCAD Civil 3D 2018</span>
        <span>ConservatoryofFlowers_Elevation_export_TueAug21222308.dxf</span>
      </h1>
      <div className="mt-[6px] flex h-6 w-[447px] items-center bg-[#9c9c9c] text-white">
        <svg viewBox="0 0 4 8" className="ml-[5px] h-2 w-1" aria-hidden="true"><path d="M0 0l4 4-4 4z" fill="#fff" /></svg>
        <input
          aria-label="Search"
          placeholder="Type a keyword or phrase"
          className="ml-[5px] h-[22px] w-[180px] border border-[#3f3f3f] bg-[#6a6a6a] px-[3px] italic outline-none placeholder:text-[#d0d0d0]"
        />
        <button aria-label="Find" className="ml-1"><Icon name="binoculars" /></button>
        <button className="ml-2 flex items-center gap-[6px]"><Icon name="user" />Sign In</button>
        <Caret className="ml-auto" />
        <button aria-label="Store" className="ml-[10px]"><Icon name="cart" /></button>
        <button aria-label="Share" className="ml-2 flex items-center gap-1"><Icon name="share" /><Caret /></button>
        <button aria-label="Help" className="ml-[18px] flex items-center gap-2">
          <span className="flex size-[17px] items-center justify-center rounded-full border border-[#24407a] bg-[#eef3fb] font-bold text-[#24407a]">?</span>
          <Caret />
        </button>
        <span className="w-[3px]" />
      </div>
      <div className="flex h-[27px] w-[162px] items-center justify-end gap-9 pr-4 text-black">
        <button aria-label="Minimize"><svg viewBox="0 0 10 10" className="size-[10px]"><path d="M0 5.5h10" stroke="#000" /></svg></button>
        <button aria-label="Maximize"><svg viewBox="0 0 10 10" className="size-[10px]"><path d="M.5.5h9v9h-9z" fill="none" stroke="#000" /></svg></button>
        <button aria-label="Close"><svg viewBox="0 0 10 10" className="size-[10px]"><path d="M0 0l10 10M10 0L0 10" stroke="#000" /></svg></button>
      </div>
    </div>
  );
}

function Ribbon() {
  return (
    <>
      <nav className="flex h-5 items-end border-t border-[#333] bg-[#505050] pl-[46px] leading-[15px] text-[#d0d0d0]">
        <button className="flex h-[18px] w-[49px] items-start justify-center rounded-t-sm border border-b-0 border-[#858585] bg-[#5a5a5a] text-white">Home</button>
        <span className="w-[2px]" />
        {ribbonTabs.map(([name, w]) => (
          <button key={name} className={`flex h-[18px] items-start justify-center whitespace-nowrap ${w}`}>{name}</button>
        ))}
        <button aria-label="Minimize ribbon" className="mb-[5px] ml-[22px] flex items-center gap-[6px]">
          <span className="flex h-[9px] w-[14px] items-center justify-center rounded-sm bg-[#eee] text-black"><Caret className="rotate-180" /></span>
          <Caret />
        </button>
      </nav>
      <div className="flex h-[98px] border-t border-[#2f2f2f] bg-linear-to-b from-[#484848] to-[#383838] pl-[2px] text-[#f4f4f4]">
        <Panel title="Palettes" caret className="w-[112px]">
          <div className="flex pl-[1px]">
            <button className="flex h-[72px] w-[59px] flex-col items-center rounded-xs border border-[#26385c] bg-linear-to-b from-[#7396cd] to-[#48628f] pt-1">
              <Icon name="tools" size="size-[30px]" />
              <span className="mt-[3px]">Toolspace</span>
            </button>
            <div className="grid auto-rows-[24px] grid-cols-[24px_24px] pl-[1px]">
              {['prospector', 'wrenches', 'survey', 'toolbox'].map((n) => (
                <button key={n} aria-label={n} className="flex h-[22px] items-center justify-center border border-[#26385c] bg-linear-to-b from-[#7396cd] to-[#4e6996]">
                  <Icon name={n} />
                </button>
              ))}
              <button aria-label="Properties" className="flex items-center justify-center"><Icon name="palA" /></button>
              <button aria-label="Tool palettes" className="flex items-center justify-center"><Icon name="palB" /></button>
            </div>
          </div>
        </Panel>
        <Panel title="Create Ground Data" caret className="w-[129px]">
          <div className="flex flex-col items-start pl-[25px]">
            <Cmd icon="points" label="Points" caret />
            <Cmd icon="surfaces" label="Surfaces" caret />
            <Cmd icon="traverse" label="Traverse" caret />
          </div>
        </Panel>
        <Panel title="Create Design" caret className="w-[321px]">
          <div className="grid grid-cols-[106px_98px_1fr] pl-[7px]">
            <Cmd icon="parcel" label="Parcel" caret />
            <Cmd icon="alignment" label="Alignment" caret />
            <Cmd icon="intersections" label="Intersections" caret />
            <Cmd icon="featureLine" label="Feature Line" caret />
            <Cmd icon="profile" label="Profile" caret />
            <Cmd icon="assembly" label="Assembly" caret />
            <Cmd icon="grading" label="Grading" caret />
            <Cmd icon="corridor" label="Corridor" />
            <Cmd icon="pipe" label="Pipe Network" caret />
          </div>
        </Panel>
        <Panel title="Profile & Section Views" className="w-[133px]">
          <div className="flex flex-col items-start pl-[14px]">
            <Cmd icon="profileView" label="Profile View" caret />
            <Cmd icon="sampleLines" label="Sample Lines" />
            <Cmd icon="sectionViews" label="Section Views" caret />
          </div>
        </Panel>
        <Panel title="Draw" caret className="w-[119px]">
          <div className="grid grid-cols-[36px_40px_1fr] pl-2">
            <IconCmd icon="line" caret />
            <IconCmd icon="arc" caret />
            <IconCmd icon="pline" />
            <IconCmd icon="construct" caret />
            <IconCmd icon="circle" caret />
            <IconCmd icon="rect" caret />
            <IconCmd icon="arc3" caret />
            <IconCmd icon="ellipse" caret />
            <IconCmd icon="hatch" caret />
          </div>
        </Panel>
        <Panel title="Modify" caret className="w-[250px]">
          <div className="grid grid-cols-[72px_69px_75px_1fr] pl-[7px]">
            <Cmd icon="move" label="Move" />
            <Cmd icon="rotate" label="Rotate" />
            <Cmd icon="trim" label="Trim" caret />
            <IconCmd icon="erase" />
            <Cmd icon="copy" label="Copy" />
            <Cmd icon="mirror" label="Mirror" />
            <Cmd icon="fillet" label="Fillet" caret />
            <IconCmd icon="explode" />
            <Cmd icon="stretch" label="Stretch" />
            <Cmd icon="scale" label="Scale" />
            <Cmd icon="array" label="Array" caret />
            <IconCmd icon="offset" />
          </div>
        </Panel>
        <Panel title="Layers" caret className="w-[274px]">
          <div className="flex pl-[2px]">
            <button className="flex w-[60px] flex-col items-center pt-[2px] leading-[15px]">
              <Icon name="layerProps" size="size-8" />
              <span className="mt-1">Layer<br />Properties</span>
            </button>
            <div className="flex-1">
              <div className="mr-[2px] flex h-[22px] items-center gap-[3px] border border-[#333] bg-linear-to-b from-[#636363] to-[#555] pr-[2px] pl-[3px]">
                <Icon name="bulb" />
                <Icon name="sun" />
                <Icon name="unlock" />
                <span className="ml-[2px] size-[14px] border border-black bg-white" />
                <select aria-label="Layer" className="ml-[2px] flex-1 appearance-none text-[#e0e0e0] outline-none">
                  <option>0</option>
                </select>
                <Caret big />
              </div>
              <div className="mt-[2px] grid grid-cols-[24px_24px_24px_24px_1fr] pl-[4px]">
                <IconCmd icon="ly1" />
                <IconCmd icon="ly2" />
                <IconCmd icon="ly3" />
                <IconCmd icon="ly4" />
                <Cmd icon="makeCurrent" label="Make Current" />
                <IconCmd icon="ly5" />
                <IconCmd icon="ly6" />
                <IconCmd icon="ly7" />
                <IconCmd icon="ly8" />
                <Cmd icon="matchLayer" label="Match Layer" />
              </div>
            </div>
          </div>
        </Panel>
        <Panel title="Clipboard" className="w-[78px]">
          <div className="flex pl-2">
            <button className="flex w-9 flex-col items-center pt-[2px]">
              <Icon name="paste" size="size-8" />
              <span className="mt-[3px] leading-[16px]">Paste</span>
              <Caret className="mt-[5px]" />
            </button>
            <div className="flex flex-col pl-3">
              <IconCmd icon="cut" />
              <IconCmd icon="copyClip" />
              <IconCmd icon="pasteSpec" />
            </div>
          </div>
        </Panel>
      </div>
      <div className="flex h-[30px] border-t border-b-4 border-t-[#8a8a8a] border-b-[#5b5b5b] bg-[#393939] pt-[3px]">
        <button className="ml-[14px] h-[22px] w-[130px] bg-[#505050] pr-[72px] text-center text-[#c4c4c4] [clip-path:polygon(0_100%,3%_85%,6%_12%,8%_0,94%_0,98%_10%,100%_30%,100%_100%)]">
          Start
        </button>
        <div className="-ml-[6px] flex h-[22px] w-[276px] items-center justify-between bg-linear-to-b from-[#7a7a7a] to-[#5b5b5b] pr-4 pl-4 text-white [clip-path:polygon(0_100%,1%_70%,2%_20%,4%_0,94%_0,96%_10%,99%_80%,100%_100%)]">
          <span className="whitespace-nowrap">ConservatoryofFlowe...ueAug21222308.dxf*</span>
          <button aria-label="Close tab">
            <svg viewBox="0 0 8 8" className="size-[7px]"><path d="M0 0l8 8M8 0L0 8" stroke="#3f3f3f" strokeWidth="2" /></svg>
          </button>
        </div>
        <button aria-label="New drawing" className="mt-[3px] ml-[5px] h-4 w-[22px] rounded-tr-lg rounded-bl-lg bg-[#505050] text-sm leading-4 font-bold text-[#ddd]">+</button>
      </div>
    </>
  );
}

function SideTabs({ items, active, height }: { items: string[]; active: string; height: string }) {
  return (
    <div className="flex w-5 flex-col">
      {items.map((t) => (
        <button
          key={t}
          className={`flex items-center justify-center rounded-r-md border border-l-0 border-[#2f2f2f] pl-[3px] ${height} ${
            t === active ? 'bg-[#5b5b5b] text-white' : 'bg-[#505050] text-[#b9b9b9]'
          }`}
        >
          <span className="rotate-180 whitespace-nowrap [writing-mode:vertical-rl]">{t}</span>
        </button>
      ))}
    </div>
  );
}

function DownArrow({ className = '' }: { className?: string }) {
  return (
    <svg viewBox="0 0 10 6" className={`h-[6px] w-[10px] shrink-0 ${className}`} aria-hidden="true">
      <path d="M1 1l4 4 4-4" fill="none" stroke="#444" strokeWidth="1.3" />
    </svg>
  );
}

function TaskPane() {
  const tools = [
    ['Data', 'db', 'w-[34px]', 'text-black'],
    ['Style', 'brush', 'w-[29px]', 'text-[#9a9a9a]'],
    ['Table', 'table', 'w-[35px]', 'text-[#9a9a9a]'],
    ['Tools', 'tools', 'w-[33px]', 'text-black'],
    ['Maps', 'map', 'w-[36px]', 'text-black'],
  ];
  return (
    <div className="flex h-[429px] shrink-0 border-b border-[#454545]">
      <div className="w-[233px] pt-[2px]">
        <h2 className="h-[19px] bg-[#505050] pl-[14px] leading-[18px] text-white">TASK PANE</h2>
        <div className="mt-[7px] flex h-[21px] items-center pl-3 text-black">
          <label htmlFor="display-map" className="w-[70px] whitespace-nowrap">Display Map:</label>
          <div className="flex h-full w-[140px] items-center border border-[#adadad] bg-[#e1e1e1] pr-1 pl-[3px]">
            <select id="display-map" className="flex-1 appearance-none outline-none">
              <option>Default</option>
            </select>
            <DownArrow />
          </div>
        </div>
        <div className="mt-[10px] ml-[11px] flex h-[53px] w-[211px] bg-linear-to-b from-[#8a8a8a] from-0% to-white to-12%">
          {tools.map(([label, icon, w, color]) => (
            <button key={label} className={`flex flex-col items-center pt-2 leading-4 ${w} ${color}`}>
              <Icon name={icon} size="size-6" />
              <span className="mt-[2px]">{label}</span>
            </button>
          ))}
        </div>
        <div className="mt-[11px] ml-[10px] flex h-[27px] items-center text-black">
          <button className="flex h-full w-[63px] items-center gap-[6px] bg-linear-to-b from-[#2fa5ee] to-[#7cc6f5] pl-[2px]">
            <Icon name="groups" />
            Groups
          </button>
          <span className="ml-2 h-6 w-px bg-[#7d7d7d]" />
          <button className="ml-[9px] flex items-center gap-[6px]">
            <Icon name="sheets" />
            Draw Order
          </button>
        </div>
        <div className="mt-[9px] ml-[11px] h-64 w-[211px] bg-white pt-[5px] text-black">
          <div className="flex h-[26px] items-center pl-4">
            <svg viewBox="0 0 12 7" className="h-[7px] w-3" aria-hidden="true">
              <path d="M0 .5h12L6 7z" fill="#6f8ba5" />
              <path d="M2 1h8L6 3z" fill="#c3d2df" />
            </svg>
            <span className="relative ml-2 size-[14px]">
              <input id="map-base" type="checkbox" defaultChecked className="block size-[14px] appearance-none border border-[#2d5273] bg-[#edf3f8]" />
              <svg viewBox="0 0 10 10" className="pointer-events-none absolute inset-[2px] size-[10px]" aria-hidden="true">
                <path d="M1 4.5L4 8l5-7" fill="none" stroke="#22a122" strokeWidth="2" />
              </svg>
            </span>
            <label htmlFor="map-base" className="ml-[65px] italic">Map Base</label>
          </div>
          <div className="flex h-[26px] items-center pl-[58px]">
            <input id="map-default" type="checkbox" className="size-[14px] appearance-none border border-[#2d5273] bg-[#edf3f8]" />
            <span className="ml-[10px] h-px w-[42px] bg-[#ccc]" />
            <label htmlFor="map-default" className="ml-[13px]">Default</label>
          </div>
        </div>
      </div>
      <div className="pt-6">
        <SideTabs items={['Display Manager', 'Map Explorer', 'Map Book', 'Survey']} active="Display Manager" height="h-24" />
      </div>
    </div>
  );
}

const treeItems = [
  ['General', 'treeGeneral'],
  ['Point', 'treePoint'],
  ['Surface', 'treeSurface'],
  ['Parcel', 'treeParcel'],
  ['Grading', 'treeGrading'],
  ['Alignment', 'treeAlign'],
  ['Profile', 'treeProfile'],
  ['Profile View', 'treePV'],
  ['Superelevation View', 'treeSuper'],
  ['Cant View', 'treeCant'],
  ['Sample Line', 'treeSample'],
  ['Section', 'treeSection'],
  ['Section View', 'treeSV'],
  ['Mass Haul Line', 'treeMass'],
  ['Mass Haul View', 'treeMassView'],
];

function Expander({ open = false }: { open?: boolean }) {
  return (
    <svg viewBox="0 0 9 9" className="size-[9px] shrink-0" aria-hidden="true">
      <path d="M.5.5h8v8h-8z" fill="#fff" stroke="#919191" />
      <path d={open ? 'M2 4.5h5' : 'M2 4.5h5M4.5 2v5'} stroke="#2b3a5c" />
    </svg>
  );
}

function Toolspace() {
  return (
    <div className="flex flex-1">
      <div className="flex w-[233px] flex-col pt-[3px]">
        <h2 className="h-5 bg-[#505050] pl-[14px] leading-[18px] text-white">TOOLSPACE</h2>
        <div className="flex h-[30px] items-center justify-end gap-[11px] pr-[6px]">
          <button aria-label="Item view"><Icon name="panorama" /></button>
          <button aria-label="Preview"><Icon name="listPanel" /></button>
          <button aria-label="Help" className="size-[15px] border border-[#222] bg-[#f2f2f2] text-xs leading-[13px] font-bold text-black">?</button>
        </div>
        <div className="flex h-[21px] items-center bg-[#e1e1e1] pr-[4px] pl-[3px] text-black">
          <select aria-label="View" className="flex-1 appearance-none outline-none">
            <option>Active Drawing Settings View</option>
          </select>
          <DownArrow />
        </div>
        <div className="mt-[3px] w-[232px] bg-white pt-[2px] text-black">
          <div className="flex h-[323px] overflow-hidden">
            <div className="flex-1">
              <div className="flex h-5 items-center pl-[9px]">
                <Expander open />
                <span className="w-[7px] border-t border-dotted border-[#888]" />
                <Icon name="drawing" />
                <span className="ml-[7px] whitespace-nowrap font-bold">ConservatoryofFlowers_Elev...</span>
              </div>
              <ul className="ml-8 border-l border-dotted border-[#888]">
                {treeItems.map(([name, icon]) => (
                  <li key={name} className="-ml-[5px] flex h-5 items-center">
                    <Expander />
                    <span className="w-[7px] border-t border-dotted border-[#888]" />
                    <Icon name={icon} />
                    <span className="ml-[7px] whitespace-nowrap">{name}</span>
                  </li>
                ))}
                <li className="ml-[11px] h-[3px] w-4 border-b-2 border-dashed border-[#333]" />
              </ul>
            </div>
            <div className="flex w-[18px] flex-col items-center bg-[#f0f0f0] pr-[2px]">
              <span className="flex h-[17px] items-center"><DownArrow className="rotate-180" /></span>
              <span className="h-[136px] w-[15px] bg-[#cdcdcd]" />
              <span className="mt-auto flex h-[19px] items-center"><DownArrow /></span>
            </div>
          </div>
          <div className="flex h-4 items-center bg-[#f0f0f0] pr-[21px] pl-1">
            <DownArrow className="rotate-90" />
            <span className="ml-1 h-[14px] w-[103px] bg-[#cdcdcd]" />
            <DownArrow className="ml-auto -rotate-90" />
          </div>
        </div>
        <div className="mt-[9px] mb-1 flex-1 border border-l-0 border-[#9a9a9a]" />
      </div>
      <div className="pt-[25px]">
        <SideTabs items={['Prospector', 'Settings', 'Survey', 'Toolbox']} active="Settings" height="h-[119px]" />
      </div>
    </div>
  );
}

const cmdOptions = ['All', 'Center', 'Dynamic', 'Extents', 'Previous', 'Scale', 'Window', 'Object'];

function CommandLine() {
  return (
    <div className="absolute bottom-0 left-[298px] w-[888px] font-['DejaVu_Sans_Mono',monospace] text-xs">
      <div className="ml-[59px] flex flex-col items-start gap-[5px]">
        <span className="rounded-xs bg-[#4b4e50] px-[2px] leading-[15px] text-[#aeb0b1]">Command: ZOOM</span>
        <span className="rounded-xs bg-[#55585a] px-[2px] leading-[15px] whitespace-nowrap text-[#ececec]">
          Specify corner of window, enter a scale factor (nX or nXP), or
        </span>
      </div>
      <div className="mt-[2px] flex h-[27px] border border-[#777] bg-white text-black">
        <div className="flex w-[52px] items-center gap-[6px] bg-linear-to-b from-[#8a8a8a] to-[#3f3f3f] pl-[3px]">
          <svg viewBox="0 0 6 18" className="h-[18px] w-[6px]" aria-hidden="true">
            <path d="M1 0v18M4.5 0v18" stroke="#cfcfcf" strokeWidth="1.5" strokeDasharray="1.5 1.5" />
          </svg>
          <button aria-label="Close">
            <svg viewBox="0 0 10 10" className="size-[9px]"><path d="M1 1l8 8M9 1L1 9" stroke="#fff" strokeWidth="2" /></svg>
          </button>
          <button aria-label="Customize" className="ml-1">
            <svg viewBox="0 0 14 14" className="size-[14px]">
              <path d="M1 3.5l2 1.300L4.500 3.500 3.500 1.300c2-.8 4 1 3.300 3l6 6c.8 1.300-.8 3-2 2l-6-6C3 7 .5 5.500 1 3.500z" fill="#f4f4f4" />
            </svg>
          </button>
        </div>
        <div className="flex flex-1 items-center pr-[2px] pl-[5px]">
          <svg viewBox="0 0 16 16" className="size-4" fill="none" stroke="#777" aria-hidden="true">
            <circle cx="5.5" cy="5.5" r="4.5" strokeDasharray="2 1" />
            <path d="M5.5 3v3H8" />
            <circle cx="10.5" cy="10.5" r="2" />
            <path d="M12 12l3 3" strokeWidth="1.5" />
          </svg>
          <Caret className="ml-[2px] text-[#777]" />
          <span className="ml-[7px] whitespace-nowrap">ZOOM</span>
          <span className="ml-[4px]">[</span>
          <span className="flex gap-[4px]">
            {cmdOptions.map((o) => (
              <button key={o} className="rounded-xs bg-[#d4d4d4] leading-[17px]">
                <span className="text-[#2222cc]">{o[0]}</span>
                {o.slice(1)}
              </button>
            ))}
          </span>
          <span className="ml-[3px]">]</span>
          <label htmlFor="command" className="ml-2 whitespace-nowrap">&lt;real time&gt;:</label>
          <input id="command" defaultValue="E" className="ml-2 min-w-0 flex-1 outline-none" />
          <Caret big className="rotate-180" />
        </div>
      </div>
    </div>
  );
}

function ViewCube() {
  return (
    <div className="absolute top-[37px] right-[14px] size-[138px] font-['Liberation_Sans'] text-xl font-bold text-[#b4b6b8]">
      <div className="absolute inset-2 rounded-full border-[14px] border-[#434a52]" />
      <div className="absolute top-[43px] left-[43px] flex size-[52px] items-center justify-center border border-[#8c8e90] bg-[#b4b5b6]">
        <div className="flex size-8 items-center justify-center bg-[#a9aeb3] font-['Open_Sans'] text-xs text-[#3d4248]">TOP</div>
      </div>
      <span className="absolute top-0 left-1/2 -translate-x-1/2 leading-[26px]">N</span>
      <span className="absolute bottom-0 left-1/2 -translate-x-1/2 leading-[26px]">S</span>
      <span className="absolute top-1/2 left-[3px] -translate-y-1/2 leading-[26px]">W</span>
      <span className="absolute top-1/2 right-[6px] -translate-y-1/2 leading-[26px]">E</span>
    </div>
  );
}

function NavBar() {
  return (
    <div className="absolute top-[236px] right-1 h-[212px] w-8 rounded-sm bg-[#54595c]">
      <svg viewBox="0 0 32 212" className="h-full w-full" fill="none" stroke="#33373b" strokeWidth="1.2" aria-hidden="true">
        <circle cx="26" cy="5" r="3" />
        <circle cx="26" cy="206" r="3" />
        <path d="M16 19.5h8q2.5 0 2.500 2.500v8a10.500 10.500 0 1 1-10.500-10.500z" />
        <circle cx="16" cy="30" r="5.5" />
        <path d="M14 49h4l-2 2zM14 119h4l-2 2zM14 157h4l-2 2z" fill="#33373b" />
        <path d="M10 82c-2-4-5-7-5-9 2-2 4 1 6 3l-2-10c0-2 2-2 3 0l2 7 0-10c1-2 3-2 3 0l1 9 3-8c2-1 3 0 2 2l-2 9 3-5c2-1 3 0 2 2-2 4-3 8-6 11z" />
        <path d="M5 91l15 16M19 91L5 106M5 95v-4h4M15 91h4v4M5 102v4h4" />
        <circle cx="21" cy="104" r="4.5" />
        <path d="M24 107l4 4" strokeWidth="2" />
        <path d="M13 128h5v20h-5zM13 135c-8 1-11 4-6 7h9M18 135c8 0 10 4 5 6l-4 1M8 139l-2 4 4 1" />
        <path d="M4 169h6v6H4zM12 169h6v6h-6zM20 169h6v6h-6zM4 178h16v13H4z" />
        <path d="M10 181l5 3.500-5 3.500z" fill="#33373b" />
      </svg>
    </div>
  );
}

function Annotations() {
  return (
    <div className="pointer-events-none absolute inset-0 overflow-hidden font-['Liberation_Sans',Arial,sans-serif] text-[40px] leading-[46px] font-bold text-[#ffff00] italic">
      <p className="absolute bottom-[225px] left-[75px] whitespace-nowrap">Type “ZOOM” here</p>
      <p className="absolute bottom-[118px] left-[946px] whitespace-nowrap">
        Type “E” to zoom
        <br />
        to the file extent
      </p>
      <svg viewBox="0 0 1000 260" className="absolute bottom-0 left-0 h-[260px] w-[1000px]" aria-hidden="true">
        <path d="M228 39L370 214" stroke="#ffff00" strokeWidth="4.5" />
        <path d="M383 230l-3-21-17 13z" fill="#ffff00" />
        <path d="M962 144L925 216" stroke="#ffff00" strokeWidth="4.5" />
        <path d="M920 231v-23l15 8z" fill="#ffff00" />
      </svg>
    </div>
  );
}

function Canvas() {
  return (
    <main className="relative min-w-0 flex-1 bg-[#212830] text-white">
      <p className="absolute top-[5px] left-[3px] leading-[18px] text-[#e8e8e8]">[−][Top][2D Wireframe]</p>
      <div className="absolute top-[10px] right-3 flex items-center gap-[10px]">
        <button aria-label="Minimize view"><svg viewBox="0 0 10 10" className="size-[10px]"><path d="M0 8h10" stroke="#fff" strokeWidth="3" /></svg></button>
        <button aria-label="Restore view">
          <svg viewBox="0 0 10 10" className="size-[10px]"><path d="M1 3.5h6V9H1zM3 1h6.5v6" fill="none" stroke="#fff" strokeWidth="1.5" /></svg>
        </button>
        <button aria-label="Close view"><svg viewBox="0 0 10 10" className="size-[10px]"><path d="M1 1l8 8M9 1L1 9" stroke="#fff" strokeWidth="2" /></svg></button>
      </div>
      <ViewCube />
      <button className="absolute top-[193px] right-[59px] flex h-[18px] w-12 items-center justify-between rounded-sm border border-[#8f9296] bg-[#7d8187] px-1 text-[#3f444b]">
        WCS
        <Caret className="text-[#9a9da2]" />
      </button>
      <NavBar />
      <svg viewBox="0 0 80 90" className="absolute bottom-[14px] left-4 h-[90px] w-20" stroke="#e6e6e6" fill="none" aria-hidden="true">
        <path d="M7.5 29v50.500H58M3.500 75.500h9v9h-9z" />
        <text x="15" y="26" fontSize="19" fill="#e6e6e6" stroke="none" className="font-['Lato'] font-light" textAnchor="middle">Y</text>
        <text x="68" y="80" fontSize="19" fill="#e6e6e6" stroke="none" className="font-['Lato'] font-light" textAnchor="middle">X</text>
      </svg>
      <CommandLine />
      <Annotations />
    </main>
  );
}

const Grip = () => (
  <span className="flex h-2 items-center justify-center">
    <span className="h-1 w-[14px] border-y border-dotted border-[#222]" />
  </span>
);

function ToolStrip({ groups }: { groups: string[][] }) {
  return (
    <div className="border border-[#333]">
      <Grip />
      {groups.map((g, i) => (
        <div key={g[0]} className={`flex flex-col items-center ${i > 0 ? 'pt-[6px]' : ''}`}>
          {i > 0 && <span className="-mt-1 mb-[2px] h-[2px] w-[18px] bg-white" />}
          {g.map((n) => (
            <button key={n} aria-label={n} className="flex h-[22px] items-center">
              <Icon name={n} />
            </button>
          ))}
        </div>
      ))}
    </div>
  );
}

const Cell = ({ className = '', children }: { className?: string; children: ReactNode }) => (
  <div className={`flex items-center justify-center gap-2 border border-[#7a7a7a] bg-[#4f4f4f] ${className}`}>{children}</div>
);

function StatusIcon({ color = '#cfcfcf', children }: { color?: string; children: ReactNode }) {
  return (
    <svg viewBox="0 0 16 16" className="size-4 shrink-0" fill="none" stroke={color} strokeWidth="1.3" aria-hidden="true">
      {children}
    </svg>
  );
}

const Man = () => <path d="M8 0l2 4-.5 4 5.500 6-2 1.500-5-4-5 4L1 14l5.500-6L6 4z" fill="currentColor" stroke="none" />;

function StatusBar() {
  return (
    <footer className="flex h-7 border-t border-[#555] bg-[#393939] text-[#eee]">
      <div className="flex h-[17px] flex-1 pl-[9px] leading-[15px] text-[#bdbdbd]">
        <button className="w-[61px] bg-linear-to-b from-[#5b5b5b] to-[#777] font-bold text-white [clip-path:polygon(0_0,100%_0,92%_90%,88%_100%,14%_100%,10%_90%)]">Model</button>
        <button className="w-[62px] bg-[#505050] [clip-path:polygon(3%_0,100%_0,92%_90%,88%_100%,12%_100%,8%_90%)]">Layout1</button>
        <button className="ml-[2px] w-[65px] bg-[#505050] [clip-path:polygon(3%_0,100%_0,92%_90%,88%_100%,12%_100%,8%_90%)]">Layout2</button>
        <button aria-label="New layout" className="ml-[2px] h-[15px] w-6 rounded-br-lg bg-[#505050] text-sm leading-[15px] font-bold">+</button>
      </div>
      <Cell className="w-[183px] justify-end pr-1 text-xs">119.4673, 58.7230, 0.0000</Cell>
      <Cell className="w-[50px] text-xs">MODEL</Cell>
      <Cell className="w-[67px]">
        <StatusIcon><path d="M3 1v14M6.5 1v14M10 1v14M13.5 1v14M1 3h14M1 6.5h14M1 10h14M1 13.5h14" strokeWidth=".8" /></StatusIcon>
        <StatusIcon><path d="M1 2h14M1 5h14M1 8h14M1 11h14M1 14h14" strokeDasharray="1 2" /></StatusIcon>
        <Caret big />
      </Cell>
      <Cell className="w-[103px]">
        <StatusIcon><path d="M2 1v13h12M2 10h4v4" /></StatusIcon>
        <StatusIcon color="#2f8fe8"><circle cx="7.5" cy="8" r="6" /><path d="M7.5 2v6H15M13 6l2 2-2 2" /></StatusIcon>
        <Caret big />
        <StatusIcon><path d="M1 1l13 14M8 0v16" /></StatusIcon>
        <Caret big />
      </Cell>
      <Cell className="w-[65px]">
        <StatusIcon color="#2f8fe8"><path d="M14 2L2 14h13M8 9l3 4" strokeWidth="1.8" /></StatusIcon>
        <StatusIcon color="#2f8fe8"><path d="M3 3h11v11H3z" strokeWidth="1.8" /><path d="M1 1h5v5H1z" fill="#1ba33a" stroke="#063" /></StatusIcon>
        <Caret big />
      </Cell>
      <Cell className="w-[109px]">
        <span className="text-[#2f8fe8]"><StatusIcon><Man /><circle cx="12" cy="3.5" r="2.5" stroke="#2f8fe8" /></StatusIcon></span>
        <span className="text-[#b5b5b5]"><StatusIcon><Man /><path d="M12 0l-2 4h3l-2 4" /></StatusIcon></span>
        <span className="text-[#b5b5b5]"><StatusIcon><Man /></StatusIcon></span>
        <span className="flex items-center gap-1">1:1<Caret big /></span>
      </Cell>
      <Cell className="w-[40px] gap-[10px]">
        <span className="text-[#c9c9c9]"><Icon name="gear" size="size-3" /></span>
        <Caret big />
      </Cell>
      <Cell className="w-[26px]"><StatusIcon><path d="M8 1v14M1 8h14" strokeWidth="1.8" /></StatusIcon></Cell>
      <Cell className="w-[77px] text-xs">
        <StatusIcon color="#7d9e68"><path d="M1 8l7-4 7 4-7 4z" fill="#7d9e68" /><path d="M8 1v2M8 13v2" stroke="#ccc" /></StatusIcon>
        3.5000
      </Cell>
      <Cell className="w-[26px]"><StatusIcon><path d="M2 1h5v6H2zM5 15l3-5 3 5z" /><circle cx="12.5" cy="7" r="2.5" /></StatusIcon></Cell>
      <Cell className="w-[27px]"><StatusIcon color="#2080e0"><circle cx="8" cy="8" r="7" fill="#1560b4" /><path d="M7 10l4-5" stroke="#0b3c78" strokeWidth="1.5" /></StatusIcon></Cell>
      <Cell className="w-[33px]">
        <StatusIcon color="#222"><path d="M0 0h16v16H0z" fill="#fafafa" stroke="none" /><path d="M1 12c3 0 3-9 6-9s4 9 8 9" /><path d="M13 9l3 7h-6z" fill="#e8731c" stroke="none" /></StatusIcon>
      </Cell>
      <Cell className="w-[50px]">
        <StatusIcon><path d="M1 2h14v12H1zM9 5h3v3M12 5L9 8M7 11H4V8M4 11l3-3" /></StatusIcon>
        <StatusIcon><path d="M1 3h14M1 8h14M1 13h14" strokeWidth="2" /></StatusIcon>
      </Cell>
    </footer>
  );
}

export default function App() {
  return (
    <div className="flex min-h-screen bg-[#dbe6ee] font-['Open_Sans','Noto_Sans',sans-serif] text-[11px]">
      <div className="flex min-w-0 flex-1 flex-col">
        <TitleBar />
        <Ribbon />
        <div className="flex flex-1">
          <aside className="flex w-64 shrink-0 flex-col bg-[#5b5b5b]">
            <TaskPane />
            <Toolspace />
          </aside>
          <Canvas />
          <aside className="w-[30px] shrink-0 bg-[#5b5b5b] pr-[3px] pl-1">
            <ToolStrip
              groups={[
                ['t1', 't2', 't3', 't4', 't5', 't6', 't7', 't8', 't9', 't10', 't11', 't12', 't13'],
                ['t14'],
                ['t15', 't16', 't17'],
                ['t18', 't19', 't20', 't21', 't22', 't23', 't24'],
              ]}
            />
            <ToolStrip groups={[['t10', 't5', 't8']]} />
          </aside>
        </div>
        <StatusBar />
        <div className="h-[3px] border-t border-[#1a5a8c] bg-[#7fb0cf]" />
      </div>
      <div className="w-[5px] border-l-2 border-[#2f76b5]" />
    </div>
  );
}
